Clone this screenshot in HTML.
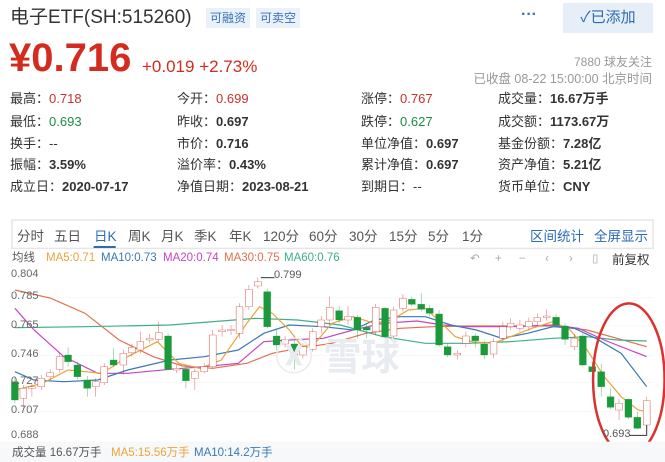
<!DOCTYPE html>
<html><head><meta charset="utf-8"><style>
*{margin:0;padding:0;box-sizing:border-box}
body{width:665px;height:462px;overflow:hidden;background:#fff;font-family:"Liberation Sans","Noto Sans CJK SC",sans-serif;color:#333;position:relative}
.a{position:absolute;white-space:nowrap}
.b{background:#e9f2fb;color:#3a72b5;font-size:12px;height:20px;line-height:20px;padding:0 4px;top:8px}
.g{font-size:13px;color:#333;line-height:16px}
.r{color:#c9302c}.gr{color:#1f8a43}
.g b{font-weight:bold}
.t{font-size:13.5px;color:#555;top:229px;line-height:16px}
.m{font-size:11.5px;top:251px;line-height:14px}
.p{font-size:11px;color:#666;left:11px;line-height:12px}
svg{position:absolute;left:0;top:210px}
</style></head><body>
<div class="a" style="left:10px;top:6px;font-size:19px;line-height:24px;color:#333">电子ETF(SH:515260)</div>
<div class="a b" style="left:206px">可融资</div>
<div class="a b" style="left:256px">可卖空</div>
<div class="a" style="left:521px;top:6px;font-size:16px;color:#3a72b5;font-weight:bold">···</div>
<div class="a" style="left:563px;top:3px;width:90px;height:30px;background:#e6eef7;color:#2d6bb5;font-size:15px;line-height:30px;text-align:center">✓已添加</div>
<div class="a" style="left:9px;top:35px;font-size:40px;line-height:46px;font-weight:bold;color:#d32b1e">¥0.716</div>
<div class="a" style="left:142px;top:56px;font-size:17px;line-height:22px;color:#d32b1e">+0.019 +2.73%</div>
<div class="a" style="right:13px;top:53px;font-size:12px;color:#999">7880 球友关注</div>
<div class="a" style="right:13px;top:68px;font-size:12.5px;color:#999">已收盘 08-22 15:00:00 北京时间</div>

<div class="a g" style="left:10px;top:91px">最高：<span class="r">0.718</span></div>
<div class="a g" style="left:10px;top:114px">最低：<span class="gr">0.693</span></div>
<div class="a g" style="left:10px;top:136px">换手：--</div>
<div class="a g" style="left:10px;top:157px">振幅：<b>3.59%</b></div>
<div class="a g" style="left:10px;top:179px">成立日：<b>2020-07-17</b></div>
<div class="a g" style="left:177px;top:91px">今开：<span class="r">0.699</span></div>
<div class="a g" style="left:177px;top:114px">昨收：<b>0.697</b></div>
<div class="a g" style="left:177px;top:136px">市价：<b>0.716</b></div>
<div class="a g" style="left:177px;top:157px">溢价率：<b>0.43%</b></div>
<div class="a g" style="left:177px;top:179px">净值日期：<b>2023-08-21</b></div>
<div class="a g" style="left:361px;top:91px">涨停：<span class="r">0.767</span></div>
<div class="a g" style="left:361px;top:114px">跌停：<span class="gr">0.627</span></div>
<div class="a g" style="left:361px;top:136px">单位净值：<b>0.697</b></div>
<div class="a g" style="left:361px;top:157px">累计净值：<b>0.697</b></div>
<div class="a g" style="left:361px;top:179px">到期日：--</div>
<div class="a g" style="left:498px;top:91px">成交量：<b>16.67万手</b></div>
<div class="a g" style="left:498px;top:114px">成交额：<b>1173.67万</b></div>
<div class="a g" style="left:498px;top:136px">基金份额：<b>7.28亿</b></div>
<div class="a g" style="left:498px;top:157px">资产净值：<b>5.21亿</b></div>
<div class="a g" style="left:498px;top:179px">货币单位：<b>CNY</b></div>

<svg width="665" height="252" viewBox="0 0 1563 756" preserveAspectRatio="none">
<rect x="28" y="30" width="1507" height="85" fill="none" stroke="#e6e6e6" stroke-width="1.5" vector-effect="non-scaling-stroke"/>
<rect x="220" y="108" width="52" height="6" fill="#2d6bb5"/>
<g stroke="#eee" stroke-width="1" vector-effect="non-scaling-stroke"><line x1="28" y1="262" x2="1535" y2="262"/><line x1="28" y1="348" x2="1535" y2="348"/><line x1="28" y1="436" x2="1535" y2="436"/><line x1="28" y1="518" x2="1535" y2="518"/><line x1="28" y1="605" x2="1535" y2="605"/></g>
<g fill="none" stroke-width="1.2">
<polyline vector-effect="non-scaling-stroke" stroke="#e07050" points="35,240 120,265 200,310 280,390 360,440 430,468 500,475 580,460 640,430 700,415 780,400 860,370 940,355 1020,350 1100,348 1200,348 1300,348 1380,360 1450,385 1520,410"/>
<polyline vector-effect="non-scaling-stroke" stroke="#3fae8a" points="35,353 200,350 400,345 600,325 700,330 800,345 900,380 1000,400 1100,400 1200,395 1300,385 1380,380 1450,390 1520,393"/>
<polyline vector-effect="non-scaling-stroke" stroke="#c545c0" points="35,295 80,360 150,440 230,490 300,490 400,478 480,470 560,460 620,395 680,390 760,385 830,360 900,340 980,333 1040,345 1100,350 1200,350 1300,345 1360,355 1420,390 1520,440"/>
<polyline vector-effect="non-scaling-stroke" stroke="#3a78b8" points="35,485 80,510 150,515 230,510 300,480 400,450 480,440 560,420 620,370 680,345 760,350 830,360 880,330 940,320 1000,320 1060,345 1120,360 1180,385 1240,370 1300,350 1350,355 1400,385 1460,430 1520,530"/>
<polyline vector-effect="non-scaling-stroke" stroke="#eba43a" points="35,540 100,520 160,480 240,490 300,440 370,395 420,460 470,475 520,450 580,340 610,290 640,310 680,360 710,410 740,400 780,340 830,320 880,340 920,330 960,300 1000,295 1030,330 1070,380 1110,395 1160,400 1200,380 1250,355 1300,335 1340,360 1380,420 1420,500 1460,560 1500,600 1520,605"/>
</g>
<g stroke-width="1" >
<g stroke="#d0352c" fill="#fff">
<line x1="55" y1="525" x2="55" y2="600"/><rect x="47" y="535" width="16" height="30"/>
<line x1="75" y1="520" x2="75" y2="560"/><rect x="67" y="530" width="16" height="5"/>
<line x1="97" y1="495" x2="97" y2="540"/><rect x="89" y="505" width="16" height="25"/>
<line x1="118" y1="478" x2="118" y2="510"/><rect x="110" y="488" width="16" height="12"/>
<line x1="140" y1="428" x2="140" y2="488"/><rect x="132" y="440" width="16" height="38"/>
<line x1="225" y1="505" x2="225" y2="560"/><rect x="217" y="515" width="16" height="15"/>
<line x1="245" y1="460" x2="245" y2="525"/><rect x="237" y="470" width="16" height="48"/>
<line x1="290" y1="418" x2="290" y2="495"/><rect x="282" y="430" width="16" height="35"/>
<line x1="310" y1="402" x2="310" y2="440"/><rect x="302" y="412" width="16" height="16"/>
<line x1="330" y1="365" x2="330" y2="430"/><rect x="322" y="395" width="16" height="25"/>
<line x1="352" y1="372" x2="352" y2="400"/><rect x="344" y="385" width="16" height="5"/>
<line x1="373" y1="335" x2="373" y2="395"/><rect x="365" y="368" width="16" height="20"/>
<line x1="415" y1="465" x2="415" y2="490"/><rect x="407" y="475" width="16" height="5"/>
<line x1="458" y1="475" x2="458" y2="540"/><rect x="450" y="485" width="16" height="20"/>
<line x1="480" y1="460" x2="480" y2="490"/><rect x="472" y="470" width="16" height="15"/>
<line x1="500" y1="360" x2="500" y2="475"/><rect x="492" y="375" width="16" height="95"/>
<line x1="522" y1="345" x2="522" y2="380"/><rect x="514" y="360" width="16" height="5"/>
<line x1="543" y1="345" x2="543" y2="375"/><rect x="535" y="358" width="16" height="4"/>
<line x1="563" y1="280" x2="563" y2="385"/><rect x="555" y="290" width="16" height="80"/>
<line x1="585" y1="225" x2="585" y2="300"/><rect x="577" y="238" width="16" height="52"/>
<line x1="606" y1="203" x2="606" y2="235"/><rect x="598" y="215" width="16" height="13"/>
<line x1="670" y1="378" x2="670" y2="412"/><rect x="662" y="388" width="16" height="14"/>
<line x1="712" y1="400" x2="712" y2="445"/><rect x="704" y="410" width="16" height="25"/>
<line x1="735" y1="355" x2="735" y2="425"/><rect x="727" y="365" width="16" height="53"/>
<line x1="755" y1="318" x2="755" y2="370"/><rect x="747" y="330" width="16" height="20"/>
<line x1="775" y1="260" x2="775" y2="345"/><rect x="767" y="292" width="16" height="38"/>
<line x1="818" y1="288" x2="818" y2="345"/><rect x="810" y="320" width="16" height="10"/>
<line x1="883" y1="282" x2="883" y2="375"/><rect x="875" y="292" width="16" height="73"/>
<line x1="925" y1="290" x2="925" y2="385"/><rect x="917" y="300" width="16" height="78"/>
<line x1="947" y1="252" x2="947" y2="305"/><rect x="939" y="265" width="16" height="30"/>
<line x1="1075" y1="420" x2="1075" y2="448"/><rect x="1067" y="430" width="16" height="5"/>
<line x1="1095" y1="365" x2="1095" y2="412"/><rect x="1087" y="378" width="16" height="22"/>
<line x1="1160" y1="385" x2="1160" y2="445"/><rect x="1152" y="395" width="16" height="37"/>
<line x1="1182" y1="335" x2="1182" y2="395"/><rect x="1174" y="350" width="16" height="35"/>
<line x1="1200" y1="325" x2="1200" y2="360"/><rect x="1192" y="340" width="16" height="10"/>
<line x1="1222" y1="330" x2="1222" y2="365"/><rect x="1214" y="345" width="16" height="10"/>
<line x1="1243" y1="322" x2="1243" y2="362"/><rect x="1235" y="335" width="16" height="15"/>
<line x1="1263" y1="310" x2="1263" y2="345"/><rect x="1255" y="322" width="16" height="13"/>
<line x1="1285" y1="298" x2="1285" y2="332"/><rect x="1277" y="318" width="16" height="4"/>
<line x1="1350" y1="372" x2="1350" y2="420"/><rect x="1342" y="385" width="16" height="25"/>
<line x1="1455" y1="568" x2="1455" y2="630"/><rect x="1447" y="580" width="16" height="20"/>
<line x1="1520" y1="560" x2="1520" y2="675"/><rect x="1512" y="572" width="16" height="73"/>
</g>
<g stroke="#1a9a3a" fill="#1a9a3a">
<line x1="35" y1="500" x2="35" y2="580"/><rect x="27" y="515" width="16" height="55"/>
<line x1="160" y1="412" x2="160" y2="470"/><rect x="152" y="435" width="16" height="20"/>
<line x1="182" y1="455" x2="182" y2="508"/><rect x="174" y="465" width="16" height="35"/>
<line x1="205" y1="498" x2="205" y2="560"/><rect x="197" y="510" width="16" height="25"/>
<line x1="267" y1="415" x2="267" y2="472"/><rect x="259" y="450" width="16" height="15"/>
<line x1="395" y1="370" x2="395" y2="480"/><rect x="387" y="378" width="16" height="100"/>
<line x1="437" y1="470" x2="437" y2="535"/><rect x="429" y="478" width="16" height="34"/>
<line x1="628" y1="235" x2="628" y2="355"/><rect x="620" y="245" width="16" height="105"/>
<line x1="650" y1="358" x2="650" y2="420"/><rect x="642" y="378" width="16" height="27"/>
<line x1="692" y1="392" x2="692" y2="478"/><rect x="684" y="402" width="16" height="33"/>
<line x1="797" y1="288" x2="797" y2="340"/><rect x="789" y="302" width="16" height="28"/>
<line x1="840" y1="315" x2="840" y2="385"/><rect x="832" y="322" width="16" height="38"/>
<line x1="862" y1="340" x2="862" y2="385"/><rect x="854" y="352" width="16" height="8"/>
<line x1="905" y1="290" x2="905" y2="385"/><rect x="897" y="295" width="16" height="85"/>
<line x1="968" y1="260" x2="968" y2="290"/><rect x="960" y="268" width="16" height="15"/>
<line x1="990" y1="250" x2="990" y2="305"/><rect x="982" y="283" width="16" height="15"/>
<line x1="1010" y1="285" x2="1010" y2="320"/><rect x="1002" y="295" width="16" height="15"/>
<line x1="1032" y1="300" x2="1032" y2="410"/><rect x="1024" y="312" width="16" height="93"/>
<line x1="1052" y1="400" x2="1052" y2="442"/><rect x="1044" y="410" width="16" height="25"/>
<line x1="1117" y1="370" x2="1117" y2="412"/><rect x="1109" y="378" width="16" height="14"/>
<line x1="1138" y1="392" x2="1138" y2="448"/><rect x="1130" y="402" width="16" height="33"/>
<line x1="1307" y1="312" x2="1307" y2="352"/><rect x="1299" y="322" width="16" height="23"/>
<line x1="1328" y1="340" x2="1328" y2="405"/><rect x="1320" y="348" width="16" height="40"/>
<line x1="1370" y1="370" x2="1370" y2="470"/><rect x="1362" y="378" width="16" height="87"/>
<line x1="1392" y1="455" x2="1392" y2="525"/><rect x="1384" y="470" width="16" height="15"/>
<line x1="1413" y1="462" x2="1413" y2="560"/><rect x="1405" y="485" width="16" height="45"/>
<line x1="1435" y1="535" x2="1435" y2="598"/><rect x="1427" y="560" width="16" height="32"/>
<line x1="1477" y1="565" x2="1477" y2="628"/><rect x="1469" y="568" width="16" height="54"/>
<line x1="1498" y1="605" x2="1498" y2="658"/><rect x="1490" y="622" width="16" height="33"/>
</g>
</g>
<polyline points="613,203 645,203" stroke="#333" stroke-width="1" vector-effect="non-scaling-stroke" fill="none"/>
<polyline points="1480,676 1520,676 1520,645" stroke="#333" stroke-width="1" vector-effect="non-scaling-stroke" fill="none"/>
<ellipse cx="1478" cy="508" rx="84" ry="228" fill="none" stroke="#d8332e" stroke-width="2.5" vector-effect="non-scaling-stroke"/>
<rect x="0" y="695" width="1563" height="61" fill="#f7f8fa"/>
</svg>

<div class="a t" style="left:17px">分时</div><div class="a t" style="left:54px">五日</div>
<div class="a t" style="left:94px;color:#2d6bb5">日K</div><div class="a t" style="left:128px">周K</div>
<div class="a t" style="left:161px">月K</div><div class="a t" style="left:194px">季K</div>
<div class="a t" style="left:229px">年K</div><div class="a t" style="left:263px">120分</div>
<div class="a t" style="left:309px">60分</div><div class="a t" style="left:349px">30分</div>
<div class="a t" style="left:389px">15分</div><div class="a t" style="left:428px">5分</div>
<div class="a t" style="left:462px">1分</div>
<div class="a t" style="left:530px;color:#2d6bb5">区间统计</div><div class="a t" style="left:594px;color:#2d6bb5">全屏显示</div>

<div class="a m" style="left:12px;color:#555">均线</div>
<div class="a m" style="left:46px;color:#eba43a">MA5:0.71</div>
<div class="a m" style="left:101px;color:#3a78b8">MA10:0.73</div>
<div class="a m" style="left:163px;color:#c545c0">MA20:0.74</div>
<div class="a m" style="left:224px;color:#e0704f">MA30:0.75</div>
<div class="a m" style="left:284px;color:#3fae8a">MA60:0.76</div>
<div class="a m" style="left:470px;top:252px;color:#aaa">↶</div>
<div class="a m" style="left:495px;top:252px;color:#aaa">+</div>
<div class="a m" style="left:519px;top:252px;color:#aaa">−</div>
<div class="a m" style="left:545px;top:252px;color:#aaa">‹</div>
<div class="a m" style="left:569px;top:252px;color:#aaa">›</div>
<div class="a m" style="left:592px;top:252px;color:#aaa">▯</div>
<div class="a m" style="left:612px;top:253px;font-size:12.5px;color:#333">前复权</div>

<div class="a" style="left:275px;top:338px;font-size:38px;line-height:40px;font-weight:bold;color:#e8ebef">Ⓧ 雪球</div>

<div class="a p" style="top:268px">0.804</div>
<div class="a p" style="top:290px">0.785</div>
<div class="a p" style="top:319px">0.765</div>
<div class="a p" style="top:348px">0.746</div>
<div class="a p" style="top:375px">0.727</div>
<div class="a p" style="top:404px">0.707</div>
<div class="a p" style="top:429px">0.688</div>
<div class="a p" style="left:274px;top:269px;color:#555">0.799</div>
<div class="a p" style="left:603px;top:428px;color:#555">0.693</div>

<div class="a" style="left:12px;top:444px;font-size:11.5px;color:#555">成交量 16.67万手</div>
<div class="a" style="left:111px;top:444px;font-size:11.5px;color:#eba43a">MA5:15.56万手</div>
<div class="a" style="left:194px;top:444px;font-size:11.5px;color:#3a78b8">MA10:14.2万手</div>
</body></html>
